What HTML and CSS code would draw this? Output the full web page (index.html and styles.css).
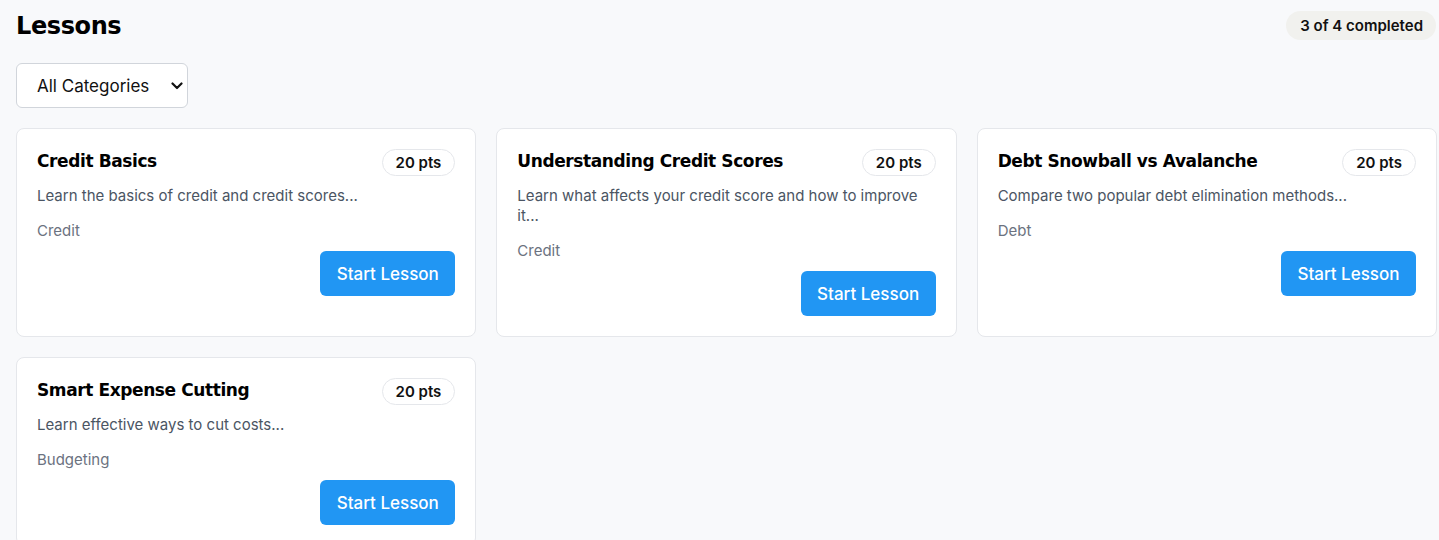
FILE: index.html
```html
<!DOCTYPE html>
<html lang="en">
<head>
<meta charset="utf-8">
<title>Lessons</title>
<link rel="stylesheet" href="styles.css">
</head>
<body>
<main class="page">
  <header class="page-header">
    <h1 class="page-title">Lessons</h1>
    <span class="progress-pill">3 of 4 completed</span>
  </header>
  <div class="filter-row">
    <div class="select-wrap">
      <select class="category-select">
        <option>All Categories</option>
        <option>Credit</option>
        <option>Debt</option>
        <option>Budgeting</option>
      </select>
      <svg class="chevron" width="12" height="8" viewBox="0 0 12 8" aria-hidden="true"><path d="M1.5 1.5 L6 6 L10.5 1.5" fill="none" stroke="#111" stroke-width="2.2" stroke-linecap="round" stroke-linejoin="round"/></svg>
    </div>
  </div>
  <section class="lesson-grid">
    <article class="lesson-card">
      <div class="card-head">
        <h2 class="card-title">Credit Basics</h2>
        <span class="pts">20 pts</span>
      </div>
      <p class="card-desc">Learn the basics of credit and credit scores...</p>
      <p class="card-cat">Credit</p>
      <div class="card-foot"><button class="start-btn">Start Lesson</button></div>
    </article>
    <article class="lesson-card">
      <div class="card-head">
        <h2 class="card-title">Understanding Credit Scores</h2>
        <span class="pts">20 pts</span>
      </div>
      <p class="card-desc">Learn what affects your credit score and how to improve it...</p>
      <p class="card-cat">Credit</p>
      <div class="card-foot"><button class="start-btn">Start Lesson</button></div>
    </article>
    <article class="lesson-card">
      <div class="card-head">
        <h2 class="card-title">Debt Snowball vs Avalanche</h2>
        <span class="pts">20 pts</span>
      </div>
      <p class="card-desc">Compare two popular debt elimination methods...</p>
      <p class="card-cat">Debt</p>
      <div class="card-foot"><button class="start-btn">Start Lesson</button></div>
    </article>
    <article class="lesson-card">
      <div class="card-head">
        <h2 class="card-title">Smart Expense Cutting</h2>
        <span class="pts">20 pts</span>
      </div>
      <p class="card-desc">Learn effective ways to cut costs...</p>
      <p class="card-cat">Budgeting</p>
      <div class="card-foot"><button class="start-btn">Start Lesson</button></div>
    </article>
  </section>
</main>
</body>
</html>
```
FILE: styles.css
```css
* { box-sizing: border-box; }
html, body { margin: 0; padding: 0; }
body {
  background: #f8f9fb;
  font-family: Inter, "Liberation Sans", sans-serif;
  color: #111;
}
.page {
  padding: 8px 2px 0 16px;
}
.page-header {
  display: flex;
  align-items: center;
  justify-content: space-between;
  height: 35px;
  margin-bottom: 20px;
}
.page-title {
  margin: 0;
  font-family: "DejaVu Sans", sans-serif;
  font-weight: 700;
  font-size: 24px;
  letter-spacing: -0.4px;
  color: #000;
}
.progress-pill {
  background: #f1f1ee;
  border-radius: 999px;
  padding: 5px 13px 5px 14px;
  font-size: 15px;
  font-weight: 600;
  color: #111;
  margin-right: 1px;
}
.filter-row { margin-bottom: 20px; }
.select-wrap {
  position: relative;
  display: inline-flex;
  align-items: center;
  width: 172px;
  height: 45px;
  border: 1px solid #d1d5db;
  border-radius: 6px;
  background: #fff;
}
.category-select {
  appearance: none;
  -webkit-appearance: none;
  width: 100%;
  height: 100%;
  border: none;
  background: transparent;
  font-family: Inter, sans-serif;
  font-size: 17px;
  color: #111;
  padding: 0 30px 0 20px;
  outline: none;
}
.chevron {
  position: absolute;
  right: 4px;
  top: 18px;
  pointer-events: none;
}
.lesson-grid {
  display: grid;
  grid-template-columns: repeat(3, 1fr);
  column-gap: 20px;
  row-gap: 20px;
}
.lesson-card {
  background: #fff;
  border: 1px solid #e5e7eb;
  border-radius: 8px;
  padding: 20px;
}
.card-head {
  display: flex;
  justify-content: space-between;
  align-items: flex-start;
  gap: 12px;
}
.card-title {
  margin: 0;
  font-family: "DejaVu Sans", sans-serif;
  font-weight: 700;
  font-size: 17px;
  letter-spacing: -0.4px;
  line-height: 24px;
  color: #000;
}
.pts {
  flex-shrink: 0;
  border: 1px solid #e5e7eb;
  border-radius: 999px;
  height: 27px;
  padding: 0 13px;
  display: inline-flex;
  align-items: center;
  font-size: 15px;
  font-weight: 600;
  color: #111;
}
.card-desc {
  margin: 10px 0 0;
  font-size: 15px;
  line-height: 20px;
  color: #4b5563;
}
.card-cat {
  margin: 15px 0 0;
  font-size: 15px;
  line-height: 20px;
  color: #6b7280;
}
.card-foot {
  display: flex;
  justify-content: flex-end;
  margin-top: 10px;
}
.start-btn {
  background: #2196f3;
  color: #fff;
  border: none;
  border-radius: 6px;
  height: 45px;
  padding: 0 16.5px;
  font-family: Inter, sans-serif;
  font-size: 17px;
  font-weight: 500;
}
```
